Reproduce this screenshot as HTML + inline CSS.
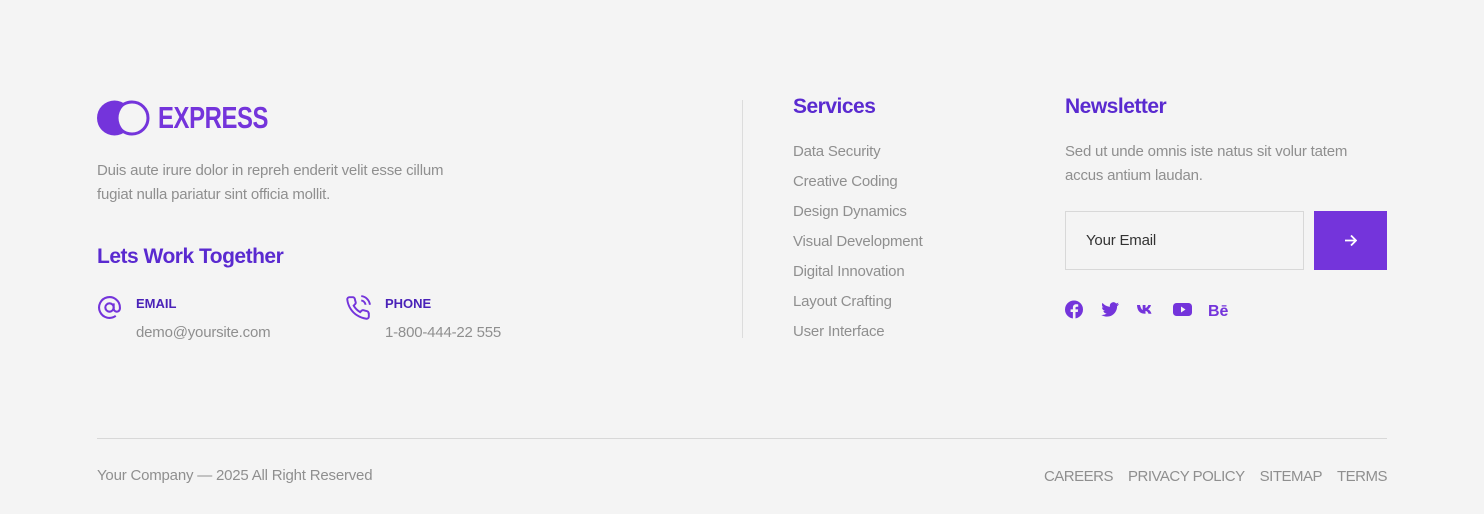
<!DOCTYPE html>
<html><head><style>
*{margin:0;padding:0;box-sizing:border-box}
body{width:1484px;height:514px;background:#f4f4f4;font-family:"Liberation Sans",sans-serif;position:relative;overflow:hidden;color:#8f8f8f}
.a{position:absolute}
.p{color:#7434db}
.h{color:#5a2ad0;font-weight:bold;font-size:21px;letter-spacing:-0.5px}
.t{font-size:15px;line-height:24px;color:#8f8f8f;letter-spacing:-0.2px}
.lnk{font-size:15px;color:#8f8f8f;line-height:30px;letter-spacing:-0.2px}
</style></head><body>
<svg class="a" style="left:97px;top:100px" width="56" height="36" viewBox="0 0 56 36">
<circle cx="17.5" cy="18" r="17.5" fill="#7434db"/>
<circle cx="35" cy="18" r="16" fill="#f4f4f4" stroke="#7434db" stroke-width="3"/>
<path d="M26 6.5 A14 14 0 0 0 26 29.5 A17 17 0 0 1 26 6.5Z" fill="#7434db"/>
</svg>
<div class="a p" style="left:158px;top:100px;font-size:31px;font-weight:bold;letter-spacing:-0.5px;transform:scaleX(0.77);transform-origin:left;line-height:36px">EXPRESS</div>
<div class="a t" style="left:97px;top:159px;width:385px">Duis aute irure dolor in repreh enderit velit esse cillum fugiat nulla pariatur sint officia mollit.</div>
<div class="a h" style="left:97px;top:245px">Lets Work Together</div>
<svg class="a" style="left:97px;top:295px" width="25" height="25" viewBox="0 0 24 24" fill="none" stroke="#7434db" stroke-width="2"><circle cx="12" cy="12" r="4"/><path d="M16 8v5a3 3 0 0 0 6 0v-1a10 10 0 1 0-4 8"/></svg>
<div class="a" style="left:136px;top:296px;font-size:13px;font-weight:bold;color:#4a22b8">EMAIL</div>
<div class="a t" style="left:136px;top:321px">demo@yoursite.com</div>
<svg class="a" style="left:345px;top:295px" width="26" height="26" viewBox="0 0 24 24" fill="none" stroke="#7434db" stroke-width="1.8"><path d="M22 16.9v3a2 2 0 0 1-2.2 2 19.8 19.8 0 0 1-8.6-3.1 19.5 19.5 0 0 1-6-6A19.8 19.8 0 0 1 2.1 4.2 2 2 0 0 1 4.1 2h3a2 2 0 0 1 2 1.7c.1.9.4 1.8.7 2.7a2 2 0 0 1-.5 2.1L8 9.8a16 16 0 0 0 6 6l1.3-1.3a2 2 0 0 1 2.1-.4c.9.3 1.8.6 2.7.7a2 2 0 0 1 1.7 2z"/><path d="M15 5a5 5 0 0 1 4 4M15 1a9 9 0 0 1 8 8"/></svg>
<div class="a" style="left:385px;top:296px;font-size:13px;font-weight:bold;color:#4a22b8">PHONE</div>
<div class="a t" style="left:385px;top:321px">1-800-444-22 555</div>
<div class="a" style="left:742px;top:100px;width:1px;height:238px;background:#dcdcdc"></div>
<div class="a h" style="left:793px;top:95px">Services</div>
<div class="a" style="left:793px;top:137px">
<div class="lnk">Data Security</div><div class="lnk">Creative Coding</div><div class="lnk">Design Dynamics</div><div class="lnk">Visual Development</div><div class="lnk">Digital Innovation</div><div class="lnk">Layout Crafting</div><div class="lnk">User Interface</div></div>
<div class="a h" style="left:1065px;top:95px">Newsletter</div>
<div class="a t" style="left:1065px;top:140px;width:310px">Sed ut unde omnis iste natus sit volur tatem accus antium laudan.</div>
<div class="a" style="left:1065px;top:211px;width:239px;height:59px;border:1px solid #d8d8d8;font-size:15px;color:#333;padding:20px 20px;letter-spacing:-0.2px">Your Email</div>
<div class="a" style="left:1314px;top:211px;width:73px;height:59px;background:#7434db"><svg style="position:absolute;left:30px;top:23px" width="13" height="13" viewBox="0 0 13 13" fill="none" stroke="#fff" stroke-width="1.8"><path d="M1 6.5h11M7 1.5l5 5-5 5"/></svg></div>
<svg class="a" style="left:1065px;top:300px" width="170" height="20" viewBox="0 0 170 20" fill="#7434db">
<circle cx="9" cy="9.5" r="9"/><path d="M10.5 19v-7h2.3l.3-2.6h-2.6V8c0-.8.2-1.3 1.3-1.3h1.4V4.4c-.3 0-1.1-.1-2-.1-2 0-3.3 1.2-3.3 3.4v1.7H5.6V12h2.3v7z" fill="#f4f4f4"/>
<path d="M54 4c-.7.3-1.4.5-2.1.6.8-.5 1.3-1.2 1.6-2-.7.4-1.5.7-2.3.9a3.6 3.6 0 0 0-6.2 3.3C42 6.6 39.3 5.1 37.5 2.9c-1 1.7-.5 3.8 1.1 4.8-.6 0-1.1-.2-1.6-.4 0 1.7 1.2 3.2 2.9 3.6-.5.1-1.1.2-1.6.1.5 1.5 1.8 2.5 3.4 2.5A7.3 7.3 0 0 1 36.3 15c1.6 1 3.5 1.6 5.5 1.6 6.7 0 10.4-5.5 10.3-10.5.7-.5 1.3-1.1 1.8-1.9z"/>
<path d="M72 5h3c.5 2.5 1.8 4.7 2.7 5V5h2.8v3c1.2-.1 2.4-1.8 2.8-3h2.7c-.4 2-1.8 3.6-3 4.3 1.2.6 2.9 2.1 3.5 4.4h-3c-.5-1.5-1.6-2.6-3-2.8v2.8h-.4C72.9 13.7 72.2 8 72 5z"/>
<rect x="108" y="3" width="19" height="13" rx="3.5"/><path d="M116 6.5v6l4.5-3z" fill="#f4f4f4"/>
<text x="143" y="16" font-family="Liberation Sans" font-weight="bold" font-size="16">Bē</text>
</svg>
<div class="a" style="left:97px;top:438px;width:1290px;height:1px;background:#d8d8d8"></div>
<div class="a t" style="left:97px;top:464px">Your Company — 2025 All Right Reserved</div>
<div class="a t" style="right:97px;top:465px;display:flex;gap:15px;letter-spacing:-0.5px"><span>CAREERS</span><span>PRIVACY POLICY</span><span>SITEMAP</span><span>TERMS</span></div>
</body></html>
